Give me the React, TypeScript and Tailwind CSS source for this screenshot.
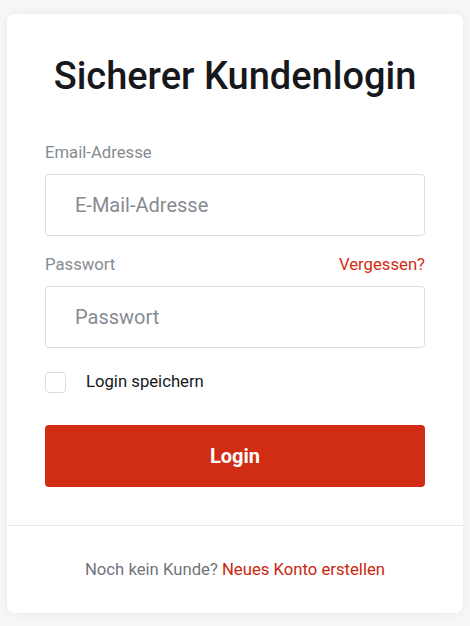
import React from "react";

export default function App() {
  return (
    <div className="min-h-[626px] w-[470px] bg-[#f7f7f7] px-[7px] pt-[14px]" style={{ fontFamily: "Roboto, 'Noto Sans', sans-serif" }}>
      <div className="rounded-lg bg-white shadow-[0_0_12px_rgba(0,0,0,0.06)]">
        <div className="px-[38px] pt-[40px] pb-[38px]">
          <h1 className="text-center text-[38px] leading-[44px] font-medium text-[#16181b]">Sicherer Kundenlogin</h1>
          <div className="mt-[43px] text-[16.7px] leading-[24px] text-[#868b92]">Email-Adresse</div>
          <div className="mt-[9px] flex h-[62px] items-center rounded-[4px] border border-[#dcdcdc] pl-[29px] text-[20px] text-[#868b92]">E-Mail-Adresse</div>
          <div className="mt-[17px] flex items-center justify-between text-[16.7px] leading-[24px]">
            <span className="text-[#868b92]">Passwort</span>
            <span className="text-[#d12d15]">Vergessen?</span>
          </div>
          <div className="mt-[9px] flex h-[62px] items-center rounded-[4px] border border-[#dcdcdc] pl-[29px] text-[20px] text-[#868b92]">Passwort</div>
          <div className="mt-[22px] flex items-center">
            <div className="h-[21px] w-[21px] rounded-[4px] border border-[#dcdcdc]"></div>
            <span className="ml-[20px] text-[16.7px] leading-[24px] text-[#16181b]">Login speichern</span>
          </div>
          <div className="mt-[31px] flex h-[62px] items-center justify-center rounded-[4px] bg-[#d12d15] text-[20px] font-bold text-white">Login</div>
        </div>
        <div className="border-t border-[#e8e8e8] pt-[32px] pb-[31px] text-center text-[16.7px] leading-[24px]">
          <span className="text-[#6f757d]">Noch kein Kunde? </span>
          <span className="text-[#c9270f]">Neues Konto erstellen</span>
        </div>
      </div>
    </div>
  );
}
